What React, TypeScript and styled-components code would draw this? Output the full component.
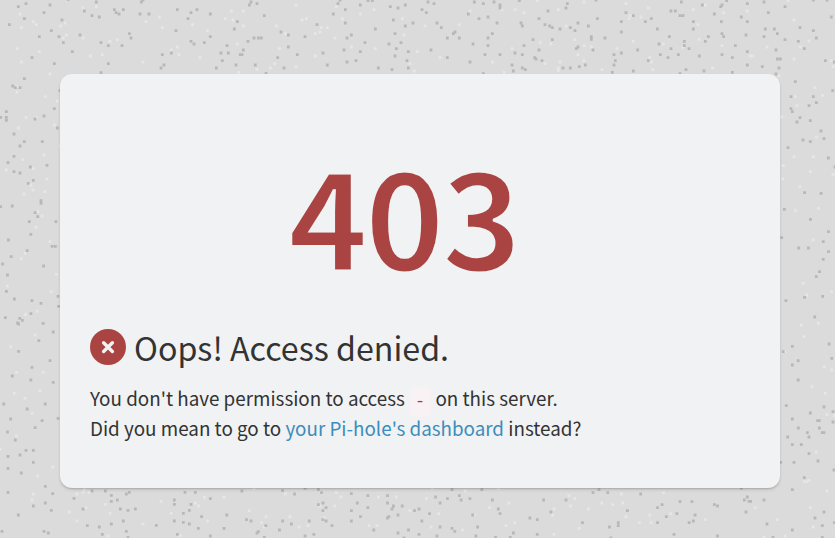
import React from "react";
import styled, { createGlobalStyle } from "styled-components";

interface Patch {
  x: number;
  y: number;
  sx: number;
  sy: number;
  dark: string;
  light: string;
}

// speckles of the wall texture, every patch has its own origin and scale
const patches: Patch[] = [
  {
    x: 0, y: 0, sx: 3, sy: 3,
    dark: "78,11 55,20 150,15 205,-2 132,38 73,56 28,74 186,60 154,92 177,110 118,110 190,128 240,105 217,155 96,173 163,191 253,33 276,47 298,51 289,6 343,29 348,38 357,42 370,29 424,6 429,0 420,42 447,42 388,101 393,114 366,137 325,137 303,128 325,191 303,218 487,164 514,159 492,195 483,204 532,29 591,29 573,38 564,56 631,42 528,92 573,124 582,132 613,128 631,110 649,204 667,182 663,159 685,159 681,137 708,195 721,164 726,164 730,150 744,124 762,114 775,114 784,114 703,87 712,65 748,15 753,6 771,11 793,47 766,195 833,173 798,220 73,236 38,258 46,263 60,263 180,272 163,326 19,335 19,352 19,361 2,352 105,357 132,348 172,384 42,402 73,425 127,425 60,438 42,469 24,488 141,496 91,501 42,515 60,519 100,541",
    light: "60,42 100,65 109,74 64,83 51,146 118,155 64,186 150,222 182,78 195,69 199,105 190,114 249,24 289,20 249,114 330,124 352,119 307,164 271,168 429,186 438,65 478,51 487,83 514,150 532,141 537,164 577,74 622,92 600,173 676,56 694,33 699,60 730,33 730,78 712,132 717,217 771,209 811,204 824,191 829,78 838,146 51,260 51,276 136,290 172,303 78,352 109,352 55,384 163,375 181,438 132,465 69,479 100,506 19,510 141,537",
  },
  {
    x: 280, y: 0, sx: 3, sy: 3,
    dark: "174,11 180,0 241,15 264,2 277,2 196,29 160,42 196,69 111,74 3,96 25,105 75,110 214,105 201,114 255,128 286,87 25,141 52,164 129,159 192,150 241,155 228,182 201,186 142,195 12,204 295,204 336,209 331,20 354,24 376,15 340,60 376,78 399,69 345,101 327,132 363,128 349,146 345,168 385,155 381,182 385,204 444,6 462,11 426,29 439,38 471,69 484,83 453,150 502,173 502,114 520,101 525,96 538,114 583,6 610,11 642,6 660,15 660,24 565,42 597,56 624,51 651,69 637,101 624,114 624,137 579,132 615,164 660,164 570,186 610,221 718,2 723,69 727,78 777,56 804,33 795,74 809,78 817,83 759,119 732,137 817,119 777,150 705,159 727,164 764,173 768,177 786,182 696,195 700,213 727,204 736,209",
    light: "48,15 169,20 282,29 241,42 187,56 79,56 66,60 124,83 142,83 120,96 106,101 16,101 165,114 214,141 286,146 106,168 48,200 367,56 372,105 435,78 412,155 480,173 390,191 403,213 538,74 570,33 664,29 705,29 732,38 772,2 637,186 696,146 781,128 813,132 795,191 673,217",
  },
  {
    x: 555, y: 0, sx: 3, sy: 3,
    dark: "37,11 33,24 123,0 127,56 69,69 46,83 60,92 100,78 15,87 109,110 109,118 114,150 69,141 64,146 150,114 91,195 73,200 46,204 24,204 172,217 177,195 181,182 177,164 199,159 199,96 199,65 213,38 235,47 271,65 289,56 307,87 348,33 361,33 375,47 384,47 379,6 343,110 312,132 348,146 316,164 339,173 370,164 388,124 388,137 402,146 280,182 248,150 235,213 393,209 375,221 442,15 415,65 415,87 478,42 497,20 501,15 515,2 499,65 501,101 506,110 460,110 451,124 433,168 447,213 501,164 532,173 541,137 532,217 559,51 577,11 577,65 573,105 577,155 577,195 627,6 640,38 690,20 631,87 658,87 667,101 627,110 690,119 663,150 667,177 676,177 672,204 622,200 663,222 735,83 775,92 784,114 730,124 748,146 829,51 811,182 838,186 775,0 816,0 721,245 708,290 708,326 712,335 775,290 784,308 762,317 735,353 726,366 766,362 798,393 807,416 744,420 766,425 699,443 820,474 833,272 840,501",
    light: "87,6 10,29 213,11 280,24 258,51 226,47 222,56 33,78 60,119 87,137 109,141 69,164 87,182 15,186 10,204 10,211 141,209 186,146 235,124 284,173 289,186 294,209 325,132 384,142 415,29 429,74 451,15 433,118 501,137 506,38 577,33 586,168 592,168 636,141 699,2 717,60 762,123 735,141 717,177 829,182 834,200 473,204 672,227 780,263 802,286 721,290 726,317 680,351 784,411 717,470 775,470 685,497 766,515 834,523 683,537",
  },
  {
    x: 0, y: 180, sx: 1.878, sy: 3,
    dark: "53,10 23,78 77,62 77,70 1,80 66,98 71,110 55,125 105,125 58,163 16,180 98,199 104,199 51,212 21,230 5,252 82,258 14,285 12,334 27,357 60,362 77,370 109,349 110,379 58,401 10,413 37,415 42,421 33,429 35,432 35,514 81,430 100,456 73,482 94,542 60,562 23,588 58,600 100,607 7,672 51,687 20,717 66,743 14,756 85,672 109,715 79,722 1511,38 1542,40 1473,88 1522,118 1556,155 1468,173 1500,204 1518,204 1546,185 1556,215 1546,238 1539,275 1533,290 1511,352 1545,349 1476,362 1530,411 1488,499 1557,492 1471,515 1499,542 1562,535 1488,555 1499,600",
    light: "62,30 45,42 84,35 71,95 79,108 58,15 68,142 40,236 94,185 47,220 106,283 14,318 96,335 70,393 48,404 66,465 20,500 31,577 81,577 27,640 47,655 75,632 60,700 31,768 1537,85 1494,92 1502,20 1527,180 1508,310 1515,345 1562,335 1505,435 1537,430 1474,515 1548,560 1562,570 1510,470 1525,620 1550,640",
  },
  {
    x: 0, y: 440, sx: 3, sy: 3,
    dark: "46,0 24,49 60,45 78,31 100,31 100,67 24,85 64,99 24,157 136,139 158,161 136,189 100,198 154,211 55,225 6,274 132,274 145,279 222,175 276,153 316,153 249,207 334,166 334,184 352,180 379,162 388,157 361,207 384,211 406,207 370,243 334,252 298,261 262,257 307,283 379,274 384,292 469,256 523,180 523,193 523,243 555,157 586,157 573,193 550,220 568,211 550,247 568,252 595,265 532,283",
    light: "158,81 113,108 100,162 96,180 231,162 249,157 253,148 267,157 258,203 208,216 316,193 330,220 231,243 325,288 429,252 483,184 514,220 586,189 596,198 541,287 0,27",
  },
  {
    x: 190, y: 484, sx: 2.851, sy: 3,
    dark: "58,44 33,98 105,93 97,133 58,156 148,21 264,20 298,30 328,13 366,17 375,26 161,107 174,111 264,111 289,120 340,111 255,138 195,143 191,147 216,125 212,160 328,156 353,151 405,125 366,62 379,57 388,71 379,80 379,107 388,111 460,29 507,35 477,57 507,71 460,80 486,98 460,111 524,138 563,35 563,57 580,66 576,75 605,66 567,98 563,102 593,93 593,147 610,162 623,138 653,151 661,111 653,75 640,80 683,89 700,39 713,57 734,44 747,17 768,35 773,48 798,44 832,17 713,129 747,133 755,142 704,156 820,129 815,156 871,160 806,93 862,48 879,75 884,89 922,147 913,160 969,102 990,107 990,151 1008,48 1029,84 1072,48 1149,26 1166,17 1191,26 1119,116 1196,129 1221,116 1221,125 1200,162 1247,80 1285,30 1333,71 1346,62 1397,53 1431,53 1388,89 1358,98 1333,116 1440,93 1435,111 1423,116 1380,151 1495,62 1504,66 1504,156",
    light: "41,40 97,40 50,111 169,80 183,14 272,30 217,98 285,98 204,116 212,129 311,129 336,125 417,26 430,39 413,66 370,66 383,102 537,39 588,39 511,125 533,125 627,80 674,44 691,13 709,89 687,129 777,138 785,21 879,13 854,71 909,57 811,93 926,116 901,125 1038,75 1034,93 1038,151 1080,35 1097,44 1085,66 1136,75 1174,57 1205,62 1230,30 1234,57 1243,98 1110,133 1281,116 1311,93 1315,116 1371,89 1350,26 1470,107",
  },
  {
    x: 735, y: 400, sx: 3, sy: 3,
    dark: "154,17 267,21 294,35 226,39 172,57 248,62 253,62 294,66 190,84 253,84 217,98 262,98 267,98 222,111 158,111 172,134 199,134 222,161 249,183 177,187 137,187 297,210 208,233 172,269 19,264 37,291 28,300 42,304 47,304 87,300 33,336 267,336 240,354 298,368 262,377 96,372 172,390 262,412 114,412",
    light: "276,44 298,48 244,156 208,245 215,245 222,241 276,273 226,323 60,323 127,359 235,381 150,408 87,412",
  },
];

// every speckle is a zero length line, the square cap draws the dot
const toPath = (tone: "dark" | "light") =>
  patches
    .map(patch =>
      patch[tone]
        .split(" ")
        .map(pair => {
          const [px, py] = pair.split(",").map(Number);
          const x = (patch.x + px / patch.sx).toFixed(2);
          const y = (patch.y + py / patch.sy).toFixed(2);
          return `M${x} ${y}h0`;
        })
        .join("")
    )
    .join("");

function Texture() {
  return (
    <TextureSvg viewBox="0 0 835 538" aria-hidden="true">
      <path d={toPath("light")} stroke="#e6e6e6" />
      <path d={toPath("dark")} stroke="#b8b8b8" />
    </TextureSvg>
  );
}

function DeniedIcon() {
  return (
    <IconSvg viewBox="0 0 36 36">
      <circle cx="18" cy="18" r="18" fill="#a94442" />
      <path d="M13.6 13.7l8.8 8.8M22.4 13.7l-8.8 8.8" stroke="#f0f2f4" strokeWidth="3.4" strokeLinecap="round" />
    </IconSvg>
  );
}

function App() {
  return (
    <>
      <GlobalStyle />
      <Page>
        <Texture />
        <Card>
          <StatusCode>403</StatusCode>
          <Headline>
            <DeniedIcon />
            Oops! Access denied.
          </Headline>
          <Message>
            You don't have permission to access <PathCode>-</PathCode> on this server.
            <br />
            Did you mean to go to <HomeLink href="#">your Pi-hole's dashboard</HomeLink> instead?
          </Message>
        </Card>
      </Page>
    </>
  );
}
export default App;

const GlobalStyle = createGlobalStyle`
  * {
    box-sizing: border-box;
  }
  body {
    margin: 0;
    overflow: hidden;
    color: #333;
    background-color: #dbdbdb;
    font-family: "Noto Sans CJK SC", sans-serif;
  }
`;

const Page = styled.div`
  display: grid;
  grid-template-columns: 835px;
  grid-template-rows: 538px;
`;

const TextureSvg = styled.svg`
  grid-area: 1 / 1;
  width: 835px;
  height: 538px;
  fill: none;
  stroke-width: 2.8px;
  stroke-linecap: square;
`;

const Card = styled.main`
  grid-area: 1 / 1;
  width: 720px;
  height: 414px;
  margin: 74px 0 0 60px;
  padding: 38px 30px 0;
  border-radius: 12px;
  background-color: #f0f2f4;
  box-shadow: 0 1px 1px rgba(0, 0, 0, 0.1), 0 2px 3px rgba(0, 0, 0, 0.12);
  z-index: 1;
`;

const StatusCode = styled.h1`
  margin: 0 0 10px 198px;
  color: #a94442;
  font-size: 135.5px;
  font-weight: 700;
  line-height: 200px;
  letter-spacing: -3.1px;
  -webkit-text-stroke: 2.8px #f0f2f4;
`;

const Headline = styled.h2`
  display: flex;
  align-items: center;
  gap: 8px;
  height: 50px;
  margin: 0;
  font-size: 32.2px;
  font-weight: 400;
  line-height: 50px;
`;

const IconSvg = styled.svg`
  width: 36px;
  height: 36px;
  fill: none;
`;

const Message = styled.p`
  margin: 11px 0 0;
  font-size: 18.82px;
  line-height: 30px;
`;

const PathCode = styled.code`
  padding: 5px 6px 6px;
  border-radius: 6px;
  color: #c7254e;
  background-color: #f9f2f4;
  font-family: "Liberation Mono", monospace;
  font-size: 17px;
  line-height: 1;
`;

const HomeLink = styled.a`
  color: #3c8dbc;
  text-decoration: none;
`;
